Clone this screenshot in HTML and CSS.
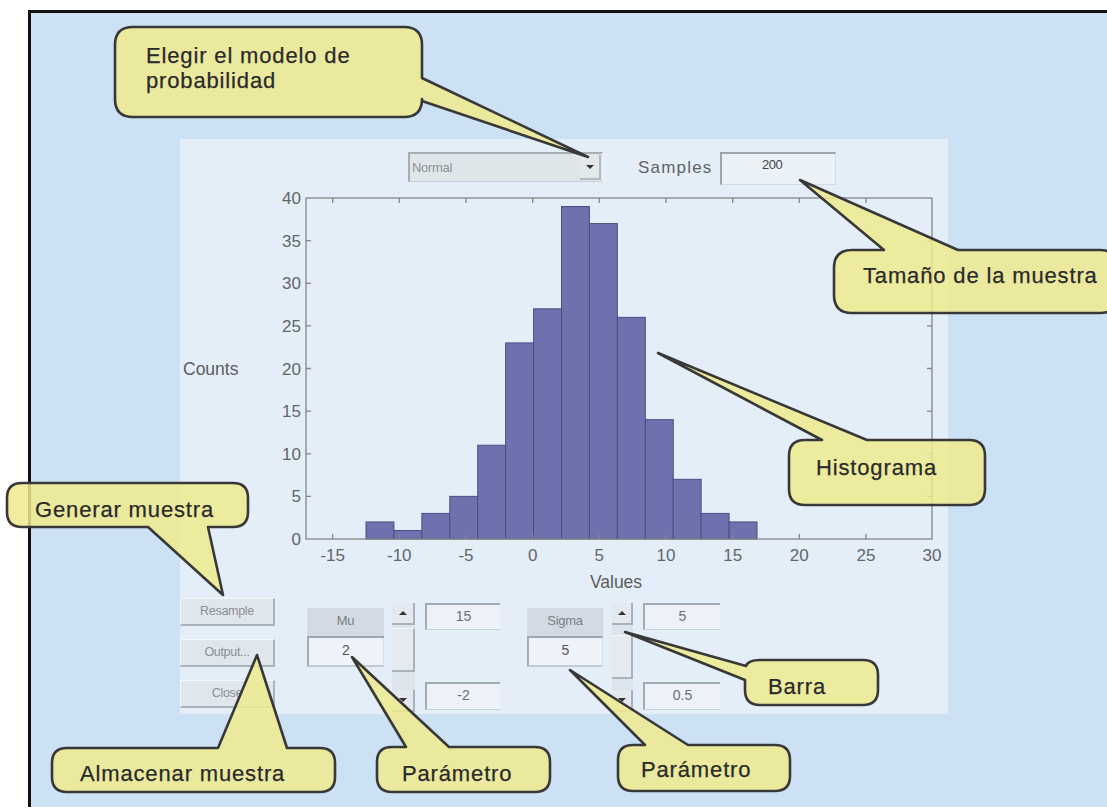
FILE: index.html
```html
<!DOCTYPE html>
<html lang="es">
<head>
<meta charset="utf-8">
<title>Histograma GUI</title>
<link rel="stylesheet" href="styles.css">
</head>
<body>
<div class="page">
  <div class="frame">
    <div class="panel">
      <div class="toprow">
        <div class="dropdown">
          <span class="dd-text">Normal</span>
          <span class="dd-btn"><span class="tri-down"></span></span>
        </div>
        <span class="samples-label">Samples</span>
        <div class="samples-input">200</div>
      </div>

      <svg class="chart" width="768" height="406" viewBox="0 0 768 406">
        <g class="bars">
          <rect x="186.00" y="331.95" width="27.93" height="17.05"/>
          <rect x="213.93" y="340.47" width="27.93" height="8.53"/>
          <rect x="241.86" y="323.42" width="27.93" height="25.58"/>
          <rect x="269.79" y="306.37" width="27.93" height="42.63"/>
          <rect x="297.72" y="255.22" width="27.93" height="93.78"/>
          <rect x="325.65" y="152.92" width="27.93" height="196.08"/>
          <rect x="353.58" y="118.82" width="27.93" height="230.18"/>
          <rect x="381.51" y="16.52" width="27.93" height="332.48"/>
          <rect x="409.44" y="33.57" width="27.93" height="315.43"/>
          <rect x="437.37" y="127.35" width="27.93" height="221.65"/>
          <rect x="465.30" y="229.65" width="27.93" height="119.35"/>
          <rect x="493.23" y="289.32" width="27.93" height="59.68"/>
          <rect x="521.16" y="323.42" width="27.93" height="25.58"/>
          <rect x="549.09" y="331.95" width="27.93" height="17.05"/>
        </g>
        <g class="axis">
          <rect x="126" y="8" width="626" height="341" fill="none"/>
          <path d="M126 306.4h5M126 263.8h5M126 221.1h5M126 178.5h5M126 135.9h5M126 93.3h5M126 50.6h5
                   M752 306.4h-5M752 263.8h-5M752 221.1h-5M752 178.5h-5M752 135.9h-5M752 93.3h-5M752 50.6h-5
                   M152.7 349v-5M219.3 349v-5M286 349v-5M352.7 349v-5M419.3 349v-5M486 349v-5M552.7 349v-5M619.3 349v-5M686 349v-5
                   M152.7 8v5M219.3 8v5M286 8v5M352.7 8v5M419.3 8v5M486 8v5M552.7 8v5M619.3 8v5M686 8v5"/>
        </g>
        <g class="ylabels">
          <text x="121" y="355">0</text>
          <text x="121" y="312.4">5</text>
          <text x="121" y="269.8">10</text>
          <text x="121" y="227.1">15</text>
          <text x="121" y="184.5">20</text>
          <text x="121" y="141.9">25</text>
          <text x="121" y="99.3">30</text>
          <text x="121" y="56.6">35</text>
          <text x="121" y="14">40</text>
        </g>
        <g class="xlabels">
          <text x="152.7" y="371">-15</text>
          <text x="219.3" y="371">-10</text>
          <text x="286" y="371">-5</text>
          <text x="352.7" y="371">0</text>
          <text x="419.3" y="371">5</text>
          <text x="486" y="371">10</text>
          <text x="552.7" y="371">15</text>
          <text x="619.3" y="371">20</text>
          <text x="686" y="371">25</text>
          <text x="752" y="371">30</text>
        </g>
        <text class="axis-title" x="3" y="185">Counts</text>
        <text class="axis-title" x="436" y="398" text-anchor="middle">Values</text>
      </svg>

      <div class="controls">
        <div class="buttons">
          <div class="btn">Resample</div>
          <div class="btn">Output...</div>
          <div class="btn">Close</div>
        </div>

        <div class="param param-mu">
          <div class="param-label">Mu</div>
          <div class="param-input">2</div>
        </div>
        <div class="slider slider-mu">
          <div class="sl-btn"><span class="tri-up"></span></div>
          <div class="sl-track"><div class="sl-thumb thumb-mu"></div></div>
          <div class="sl-btn"><span class="tri-down"></span></div>
        </div>
        <div class="limits limits-mu">
          <div class="field">15</div>
          <div class="field field-min">-2</div>
        </div>

        <div class="param param-sigma">
          <div class="param-label">Sigma</div>
          <div class="param-input">5</div>
        </div>
        <div class="slider slider-sigma">
          <div class="sl-btn"><span class="tri-up"></span></div>
          <div class="sl-track"><div class="sl-thumb thumb-sigma"></div></div>
          <div class="sl-btn"><span class="tri-down"></span></div>
        </div>
        <div class="limits limits-sigma">
          <div class="field">5</div>
          <div class="field field-min">0.5</div>
        </div>
      </div>
    </div>
  </div>
</div>

<svg class="callouts" width="1107" height="810" viewBox="0 0 1107 810">
  <g class="bubble">
    <path d="M133 27H404Q422 27 422 45V78L588 157L422 101V99Q422 117 404 117H133Q115 117 115 99V45Q115 27 133 27Z"/>
    <text x="146" y="63">Elegir el modelo de</text>
    <text x="146" y="88">probabilidad</text>
  </g>
  <g class="bubble">
    <path d="M852 250H884L800 180L958 250H1100Q1118 250 1118 268V295Q1118 313 1100 313H852Q834 313 834 295V268Q834 250 852 250Z"/>
    <text x="863" y="283">Tamaño de la muestra</text>
  </g>
  <g class="bubble">
    <path d="M805 440H822L658 353L867 440H969Q985 440 985 456V489Q985 505 969 505H805Q789 505 789 489V456Q789 440 805 440Z"/>
    <text x="816" y="475">Histograma</text>
  </g>
  <g class="bubble">
    <path d="M22 483H233Q248 483 248 498V512Q248 527 233 527H208L223 595L148 527H22Q7 527 7 512V498Q7 483 22 483Z"/>
    <text x="35" y="517">Generar muestra</text>
  </g>
  <g class="bubble">
    <path d="M67 748H218L257 655L287 748H320Q335 748 335 763V777Q335 792 320 792H67Q52 792 52 777V763Q52 748 67 748Z"/>
    <text x="80" y="781">Almacenar muestra</text>
  </g>
  <g class="bubble">
    <path d="M392 747H406L352 657L449 747H535Q550 747 550 762V777Q550 792 535 792H392Q377 792 377 777V762Q377 747 392 747Z"/>
    <text x="402" y="781">Parámetro</text>
  </g>
  <g class="bubble">
    <path d="M633 745H645L570 670L688 745H775Q790 745 790 760V776Q790 791 775 791H633Q618 791 618 776V760Q618 745 633 745Z"/>
    <text x="641" y="777">Parámetro</text>
  </g>
  <g class="bubble">
    <path d="M760 660H863Q878 660 878 675V690Q878 705 863 705H760Q745 705 745 690V680L625 632L746 666Q748 660 760 660Z"/>
    <text x="768" y="694">Barra</text>
  </g>
</svg>
</body>
</html>
```

FILE: styles.css
```css
html, body {
  margin: 0;
  padding: 0;
}

body {
  position: relative;
  width: 1107px;
  height: 810px;
  overflow: hidden;
  background: #ffffff;
  font-family: "Liberation Sans", Arial, sans-serif;
}

.page {
  padding: 10px 0 0 28px;
}

.frame {
  border-top: 3px solid #111;
  border-left: 3px solid #111;
  background: #cde1f5;
  height: 797px;
  box-sizing: border-box;
  padding: 126px 0 0 149px;
}

.panel {
  width: 768px;
  height: 575px;
  background: #e4eef9;
  display: flex;
  flex-direction: column;
}

/* ---------- top row ---------- */
.toprow {
  height: 51px;
  display: flex;
  align-items: flex-start;
  box-sizing: border-box;
  padding: 13px 0 0 228px;
}

.dropdown {
  width: 195px;
  height: 30px;
  box-sizing: border-box;
  background: #dfe6ea;
  border-top: 2px solid #a8afb4;
  border-left: 2px solid #a8afb4;
  border-right: 1px solid #f3f6f8;
  border-bottom: 1px solid #c9d0d4;
  display: flex;
  align-items: center;
  justify-content: space-between;
}

.dd-text {
  font-size: 13px;
  color: #8d9296;
  padding-left: 2px;
  letter-spacing: -0.3px;
}

.dd-btn {
  width: 21px;
  height: 25px;
  margin-right: 1px;
  box-sizing: border-box;
  background: #e2e8ec;
  border-right: 2px solid #b3babf;
  border-bottom: 2px solid #b3babf;
  display: flex;
  align-items: center;
  justify-content: center;
}

.tri-down {
  width: 0;
  height: 0;
  border-left: 4px solid transparent;
  border-right: 4px solid transparent;
  border-top: 4px solid #333;
}

.tri-up {
  width: 0;
  height: 0;
  border-left: 4px solid transparent;
  border-right: 4px solid transparent;
  border-bottom: 4px solid #333;
}

.samples-label {
  margin-left: 35px;
  margin-top: 6px;
  font-size: 17px;
  color: #5f6266;
  letter-spacing: 1.2px;
}

.samples-input {
  margin-left: 7px;
  width: 116px;
  height: 33px;
  box-sizing: border-box;
  background: #eaf1f7;
  border-top: 2px solid #9ea6ad;
  border-left: 2px solid #9ea6ad;
  border-right: 1px solid #d4dbe1;
  border-bottom: 1px solid #d4dbe1;
  text-align: center;
  font-size: 13px;
  color: #444;
  padding-top: 3px;
  padding-right: 12px;
  letter-spacing: -0.5px;
}

/* ---------- chart ---------- */
.chart {
  display: block;
  flex: none;
}

.bars rect {
  fill: #6d71ad;
  stroke: #4b4e83;
  stroke-width: 1;
}

.axis rect,
.axis path {
  stroke: #858585;
  stroke-width: 1.3;
  fill: none;
}

.ylabels text {
  font-family: "Liberation Sans", Arial, sans-serif;
  font-size: 17px;
  fill: #62656a;
  text-anchor: end;
}

.xlabels text {
  font-family: "Liberation Sans", Arial, sans-serif;
  font-size: 17px;
  fill: #62656a;
  text-anchor: middle;
}

.axis-title {
  font-family: "Liberation Sans", Arial, sans-serif;
  font-size: 17.5px;
  fill: #5a5d62;
}

/* ---------- controls ---------- */
.controls {
  flex: 1;
  display: flex;
  align-items: flex-start;
}

.buttons {
  width: 95px;
  margin-top: 2px;
  display: flex;
  flex-direction: column;
  gap: 13px;
}

.btn {
  height: 28px;
  box-sizing: border-box;
  background: #dfe6ec;
  border-top: 1px solid #f4f7fa;
  border-left: 1px solid #f4f7fa;
  border-right: 2px solid #aab3bb;
  border-bottom: 2px solid #aab3bb;
  font-size: 12.5px;
  color: #8a9096;
  text-align: center;
  line-height: 24px;
  letter-spacing: -0.3px;
}

.param {
  margin-top: 12px;
  display: flex;
  flex-direction: column;
}

.param-mu {
  margin-left: 32px;
  width: 77px;
}

.param-sigma {
  margin-left: 27px;
  width: 76px;
}

.param-label {
  height: 30px;
  box-sizing: border-box;
  background: #d2dbe4;
  border-bottom: 2px solid #9fa8b0;
  text-align: center;
  font-size: 13px;
  color: #7b8085;
  padding-top: 5px;
  letter-spacing: -0.3px;
}

.param-input {
  height: 29px;
  box-sizing: border-box;
  background: #edf3f9;
  border-left: 2px solid #a5adb4;
  border-right: 1px solid #d8dfe5;
  border-bottom: 2px solid #c3cbd2;
  text-align: center;
  font-size: 14px;
  color: #555;
  padding-top: 4px;
}

.slider {
  margin-top: 7px;
  height: 109px;
  display: flex;
  flex-direction: column;
  background: #d8e0e8;
}

.slider-mu {
  margin-left: 8px;
  width: 23px;
}

.slider-sigma {
  margin-left: 9px;
  width: 21px;
}

.sl-btn {
  height: 22px;
  flex: none;
  box-sizing: border-box;
  background: #e3e9ef;
  border-right: 2px solid #a9b2ba;
  border-bottom: 2px solid #a9b2ba;
  display: flex;
  align-items: center;
  justify-content: center;
}

.sl-track {
  flex: 1;
  display: flex;
  flex-direction: column;
  background: #dde5ec;
}

.sl-thumb {
  height: 44px;
  box-sizing: border-box;
  background: #e4eaf0;
  border-top: 1px solid #f5f8fb;
  border-right: 2px solid #aab3bb;
  border-bottom: 2px solid #aab3bb;
}

.thumb-mu {
  margin-top: 3px;
}

.thumb-sigma {
  margin-top: 10px;
}

.limits {
  margin-top: 7px;
  margin-left: 10px;
  height: 107px;
  display: flex;
  flex-direction: column;
  justify-content: space-between;
}

.limits-mu {
  width: 75px;
}

.limits-sigma {
  width: 77px;
}

.field {
  height: 27px;
  box-sizing: border-box;
  background: #ecf2f8;
  border-top: 2px solid #a3abb2;
  border-left: 2px solid #a3abb2;
  border-bottom: 1px solid #c8d0d7;
  text-align: center;
  font-size: 14px;
  color: #6a6f74;
  padding-top: 3px;
}

.field-min {
  height: 28px;
}

/* ---------- callouts overlay ---------- */
.callouts {
  position: absolute;
  left: 0;
  top: 0;
  pointer-events: none;
}

.bubble path {
  fill: rgba(239, 234, 142, 0.85);
  stroke: #383838;
  stroke-width: 2.6;
  stroke-linejoin: round;
}

.bubble text {
  font-family: "Liberation Sans", Arial, sans-serif;
  font-size: 22px;
  letter-spacing: 0.85px;
  fill: #2a2a2a;
  stroke: #2a2a2a;
  stroke-width: 0.25px;
}
```
